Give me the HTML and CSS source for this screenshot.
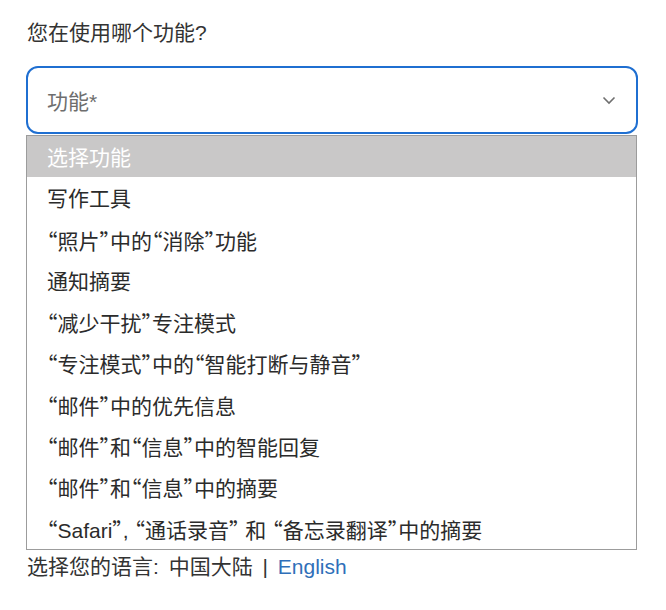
FILE: index.html
```html
<!DOCTYPE html>
<html lang="zh-CN">
<head>
<meta charset="utf-8">
<title>功能</title>
<link rel="stylesheet" href="styles.css">
</head>
<body>
<div class="page">
  <div class="title">您在使用哪个功能?</div>
  <div class="select">
    <span class="placeholder">功能*</span>
    <svg class="chevron" width="14" height="9" viewBox="0 0 14 9"><path d="M1.5 1.5 L7 7 L12.5 1.5" fill="none" stroke="#6f6f6f" stroke-width="1.6"/></svg>
  </div>
  <ul class="list">
    <li class="item selected">选择功能</li>
    <li class="item">写作工具</li>
    <li class="item"><span class="q">“</span>照片<span class="q">”</span>中的<span class="q">“</span>消除<span class="q">”</span>功能</li>
    <li class="item">通知摘要</li>
    <li class="item"><span class="q">“</span>减少干扰<span class="q">”</span>专注模式</li>
    <li class="item"><span class="q">“</span>专注模式<span class="q">”</span>中的<span class="q">“</span>智能打断与静音<span class="q">”</span></li>
    <li class="item"><span class="q">“</span>邮件<span class="q">”</span>中的优先信息</li>
    <li class="item"><span class="q">“</span>邮件<span class="q">”</span>和<span class="q">“</span>信息<span class="q">”</span>中的智能回复</li>
    <li class="item"><span class="q">“</span>邮件<span class="q">”</span>和<span class="q">“</span>信息<span class="q">”</span>中的摘要</li>
    <li class="item"><span class="q">“</span>Safari<span class="q">”</span>, <span class="q">“</span>通话录音<span class="q">”</span> 和 <span class="q">“</span>备忘录翻译<span class="q">”</span>中的摘要</li>
  </ul>
  <div class="lang"><span class="label">选择您的语言:</span> 中国大陆 <span class="sep">|</span> <a class="link" href="#">English</a></div>
</div>
</body>
</html>
```
FILE: styles.css
```css
html, body {
  margin: 0;
  padding: 0;
  background: #ffffff;
}
body {
  font-family: "Liberation Sans", "Noto Sans CJK SC", sans-serif;
  color: #333333;
}
.page {
  padding: 19px 28px 0 26px;
}
.title {
  font-size: 21px;
  line-height: 28px;
  margin-left: 1px;
  color: #333;
}
.select {
  margin-top: 19px;
  width: 612px;
  height: 68px;
  box-sizing: border-box;
  border: 2px solid #1f6fd1;
  border-radius: 12px;
  display: flex;
  align-items: center;
  justify-content: space-between;
  padding: 0 20px 0 19px;
}
.placeholder {
  font-size: 21px;
  color: #6e6e6e;
}
.chevron {
  display: block;
}
.list {
  list-style: none;
  margin: 1px 0 0 0;
  padding: 0;
  width: 611px;
  box-sizing: border-box;
  border: 1px solid #9c9c9c;
}
.item {
  height: 41.3px;
  line-height: 43px;
  padding-left: 20px;
  font-size: 21px;
  color: #2b2b2b;
  white-space: nowrap;
}
.q {
  font-family: "Noto Sans CJK SC", sans-serif;
  font-feature-settings: "halt";
}
.item.selected {
  background: #c9c8c8;
  color: #ffffff;
}
.lang {
  margin-top: 3px;
  font-size: 21px;
  line-height: 28px;
  margin-left: 1px;
  color: #333;
}
.label {
  margin-right: 4px;
}
.sep {
  margin: 0 4px;
}
.link {
  color: #2f6fb9;
  text-decoration: none;
}
```
